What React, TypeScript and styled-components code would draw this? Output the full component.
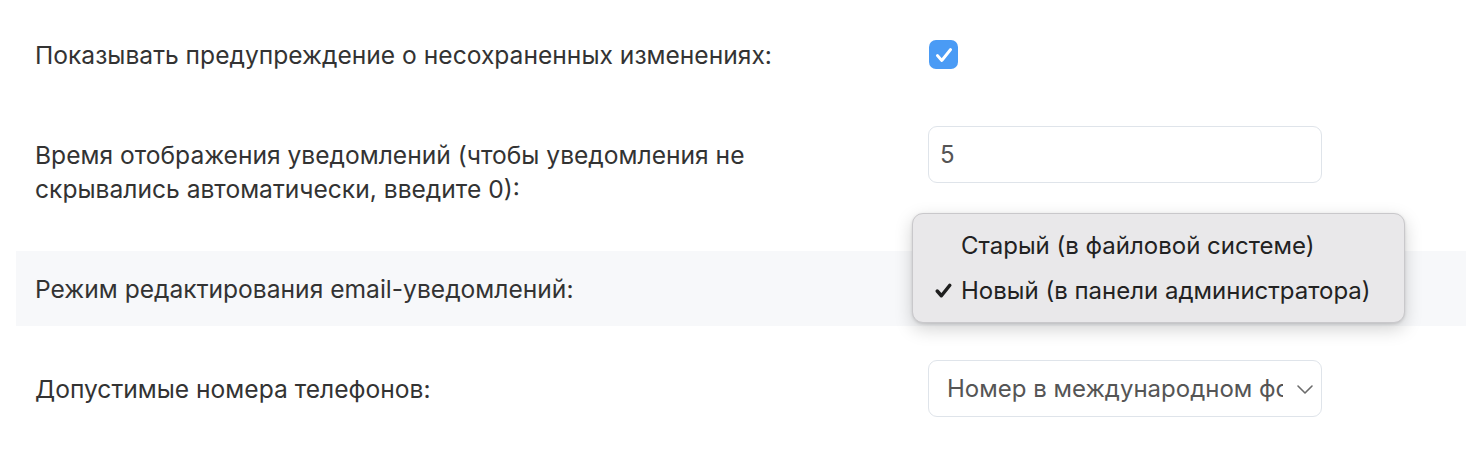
import React from 'react';
import styled, { createGlobalStyle } from 'styled-components';

const GlobalStyle = createGlobalStyle`
  html, body {
    margin: 0;
    padding: 0;
    background: #ffffff;
  }
  body {
    font-family: Inter, "Noto Sans", "Liberation Sans", sans-serif;
    color: #333333;
    -webkit-font-smoothing: antialiased;
  }
`;

const Page = styled.div`
  display: flex;
  flex-direction: column;
  gap: 25px;
  padding: 17px 0 0 16px;
  width: 1450px;
`;

const Row = styled.div<{ $highlight?: boolean }>`
  display: grid;
  grid-template-columns: 893px 394px;
  align-items: start;
  min-height: 57px;
  padding: 9px 0 9px 19px;
  background: ${(p) => (p.$highlight ? '#f7f8fa' : 'transparent')};
`;

const Label = styled.div`
  max-width: 790px;
  padding: 11.5px 0;
  font-size: 24.6px;
  line-height: 34px;
  color: #333333;
`;

const Control = styled.div`
  position: relative;
  height: 57px;
  display: flex;
  align-items: center;
`;

const CheckBox = styled.span`
  width: 29px;
  height: 29px;
  margin-left: 1px;
  border-radius: 7px;
  background: #4a9bf5;
  display: flex;
  align-items: center;
  justify-content: center;
`;

const TextInput = styled.input`
  box-sizing: border-box;
  width: 394px;
  height: 57px;
  border: 1px solid #dfe4ea;
  border-radius: 9px;
  padding: 0 11px;
  font-family: inherit;
  font-size: 24px;
  color: #555555;
  background: #ffffff;
  outline: none;
`;

const SelectBox = styled.div`
  box-sizing: border-box;
  width: 394px;
  height: 57px;
  border: 1px solid #dfe4ea;
  border-radius: 9px;
  padding: 0 6px 0 18px;
  display: flex;
  align-items: center;
  background: #ffffff;
`;

const SelectText = styled.span`
  flex: 1;
  overflow: hidden;
  white-space: nowrap;
  font-size: 24px;
  color: #555555;
  margin-right: 12px;
`;

const Popup = styled.div`
  position: absolute;
  left: -16px;
  top: -47px;
  width: 493px;
  box-sizing: border-box;
  padding: 9px 0;
  background: #e9e8ea;
  border: 1px solid #c9c8cb;
  border-radius: 11px;
  box-shadow: 0 6px 18px rgba(0, 0, 0, 0.18), 0 1px 3px rgba(0, 0, 0, 0.12);
  z-index: 10;
`;

const PopupItem = styled.div`
  display: flex;
  align-items: center;
  height: 45px;
  padding-left: 20px;
  font-size: 24px;
  color: #222222;
  white-space: nowrap;
`;

const Tick = styled.span`
  width: 28px;
  display: inline-flex;
  align-items: center;
`;

const Chevron = () => (
  <svg width="20" height="12" viewBox="0 0 20 12" fill="none">
    <path d="M3 3l7 7 7-7" stroke="#6b6b6b" strokeWidth="1.6" strokeLinecap="round" strokeLinejoin="round" />
  </svg>
);

const CheckMark = ({ color, size, weight }: { color: string; size: number; weight: number }) => (
  <svg width={size} height={size} viewBox="0 0 20 20" fill="none">
    <path d="M4 10.5l4 4.5 8-10" stroke={color} strokeWidth={weight} strokeLinecap="round" strokeLinejoin="round" />
  </svg>
);

const App: React.FC = () => {
  return (
    <>
      <GlobalStyle />
      <Page>
        <Row>
          <Label>Показывать предупреждение о несохраненных изменениях:</Label>
          <Control>
            <CheckBox>
              <CheckMark color="#ffffff" size={22} weight={2.6} />
            </CheckBox>
          </Control>
        </Row>

        <Row>
          <Label>Время отображения уведомлений (чтобы уведомления не скрывались автоматически, введите 0):</Label>
          <Control>
            <TextInput defaultValue="5" />
          </Control>
        </Row>

        <Row $highlight>
          <Label>Режим редактирования email-уведомлений:</Label>
          <Control>
            <SelectBox>
              <SelectText>Новый (в панели администратора)</SelectText>
              <Chevron />
            </SelectBox>
            <Popup>
              <PopupItem>
                <Tick />
                Старый (в файловой системе)
              </PopupItem>
              <PopupItem>
                <Tick>
                  <CheckMark color="#1f1f1f" size={21} weight={3.3} />
                </Tick>
                Новый (в панели администратора)
              </PopupItem>
            </Popup>
          </Control>
        </Row>

        <Row>
          <Label>Допустимые номера телефонов:</Label>
          <Control>
            <SelectBox>
              <SelectText>Номер в международном формате</SelectText>
              <Chevron />
            </SelectBox>
          </Control>
        </Row>
      </Page>
    </>
  );
};

export default App;
